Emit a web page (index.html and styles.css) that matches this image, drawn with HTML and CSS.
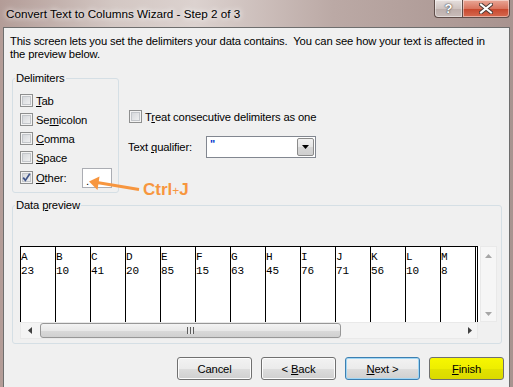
FILE: index.html
```html
<!DOCTYPE html>
<html lang="en">

<head>
    <meta charset="UTF-8">
    <link rel="stylesheet" href="styles.css">
</head>

<body>
    <div class="window">
        <div class="title-bar">
            <span class="title">Convert Text to Columns Wizard - Step 2 of 3</span>
            <div class="caption-buttons">
                <div class="cap-btn help">?</div>
                <div class="cap-btn close">
                    <svg width="14" height="11" viewBox="0 0 14 11">
                        <path d="M2 1.5 L12 9.5 M12 1.5 L2 9.5" stroke="#4a3a36" stroke-width="4" stroke-linecap="square" />
                        <path d="M2 1.5 L12 9.5 M12 1.5 L2 9.5" stroke="#fff" stroke-width="2" stroke-linecap="square" />
                    </svg>
                </div>
            </div>
        </div>

        <div class="client">
            <p class="intro">This screen lets you set the delimiters your data contains.&nbsp; You can see how your text is affected in<br>the preview below.</p>

            <div class="options">
                <fieldset class="group delimiters">
                    <legend>Delimiters</legend>
                    <label class="check-row"><span class="box"></span><span><u>T</u>ab</span></label>
                    <label class="check-row"><span class="box"></span><span>Se<u>m</u>icolon</span></label>
                    <label class="check-row"><span class="box"></span><span><u>C</u>omma</span></label>
                    <label class="check-row"><span class="box"></span><span><u>S</u>pace</span></label>
                    <label class="check-row other-row">
                        <span class="box checked">
                            <svg width="11" height="11" viewBox="0 0 11 11">
                                <path d="M2.2 5.6 L4.4 8.4 L8.8 1.8" fill="none" stroke="#3f5489" stroke-width="1.7" />
                            </svg>
                        </span>
                        <span><u>O</u>ther:</span>
                        <span class="other-input">.</span>
                    </label>
                </fieldset>

                <div class="side-options">
                    <label class="check-row"><span class="box"></span><span>T<u>r</u>eat consecutive delimiters as one</span></label>
                    <div class="qualifier-row">
                        <span class="qualifier-label">Text <u>q</u>ualifier:</span>
                        <div class="combo">
                            <span class="combo-value">"</span>
                            <span class="combo-btn">
                                <svg width="7" height="4" viewBox="0 0 7 4"><path d="M0 0 H7 L3.5 4 Z" fill="#000" /></svg>
                            </span>
                        </div>
                    </div>
                </div>
            </div>

            <fieldset class="group preview">
                <legend>Data <u>p</u>review</legend>
                <div class="preview-box">
                    <div class="grid-row">
                        <div class="grid" id="grid"></div>
                        <div class="grid-fill"></div>
                        <div class="vscroll">
                            <svg width="7" height="4" viewBox="0 0 7 4"><path d="M0 4 H7 L3.5 0 Z" fill="#a6a6a6" /></svg>
                            <svg width="7" height="4" viewBox="0 0 7 4"><path d="M0 0 H7 L3.5 4 Z" fill="#a6a6a6" /></svg>
                        </div>
                    </div>
                    <div class="hscroll-row">
                        <div class="hscroll">
                            <svg class="arrow" width="4" height="7" viewBox="0 0 4 7"><path d="M4 0 V7 L0 3.5 Z" fill="#404040" /></svg>
                            <div class="thumb"><span class="grip"></span></div>
                            <svg class="arrow right" width="4" height="7" viewBox="0 0 4 7"><path d="M0 0 V7 L4 3.5 Z" fill="#404040" /></svg>
                        </div>
                        <div class="corner"></div>
                    </div>
                </div>
            </fieldset>

            <div class="buttons">
                <button class="btn">Cancel</button>
                <button class="btn">&lt; <u>B</u>ack</button>
                <button class="btn default"><u>N</u>ext &gt;</button>
                <button class="btn finish"><u>F</u>inish</button>
            </div>
        </div>

        <!-- hint drawn over the dialog -->
        <svg class="hint-arrow" width="513" height="387" viewBox="0 0 513 387">
            <path d="M139 189.5 L94 182" stroke="#f7963f" stroke-width="3" fill="none" />
            <path d="M89 181.5 L99.5 176.5 L97.5 190 Z" fill="#f7963f" />
        </svg>
        <span class="hint-text">Ctrl<span class="plus">+</span>J</span>
    </div>

    <script>
        const columns = [
            ['A', '23'], ['B', '10'], ['C', '41'], ['D', '20'], ['E', '85'],
            ['F', '15'], ['G', '63'], ['H', '45'], ['I', '76'], ['J', '71'],
            ['K', '56'], ['L', '10'], ['M', '8']
        ];
        const grid = document.getElementById('grid');
        columns.forEach(col => {
            const div = document.createElement('div');
            div.className = 'col';
            div.innerHTML = '<span>' + col[0] + '</span><span>' + col[1] + '</span>';
            grid.appendChild(div);
        });
        const end = document.createElement('div');
        end.className = 'col-end';
        grid.appendChild(end);
    </script>
</body>

</html>
```

FILE: styles.css
```css
body {
    margin: 0;
    font-family: "Liberation Sans", Arial, sans-serif;
    font-size: 11.25px;
    letter-spacing: -0.15px;
    color: #000;
}

.window {
    position: relative;
    width: 513px;
    height: 387px;
    overflow: hidden;
    background: linear-gradient(to right, #b39c97 0%, #d3c7c3 22%, #dcd2cf 38%, #bba9a5 65%, #a8938f 100%);
}

/* title bar */
.title-bar {
    height: 27px;
    display: flex;
    align-items: flex-start;
}

.title {
    margin: 6px 0 0 6px;
    line-height: 15px;
    font-size: 11.7px;
    letter-spacing: 0;
    text-shadow: 0 0 5px #fff, 0 0 9px rgba(255, 255, 255, 0.8);
}

.caption-buttons {
    margin-left: auto;
    margin-right: 3px;
    display: flex;
}

.cap-btn {
    height: 17px;
    border: 1px solid #5f4d49;
    border-top: none;
    display: flex;
    align-items: center;
    justify-content: center;
    box-shadow: inset 0 0 0 1px rgba(255, 255, 255, 0.45);
}

.help {
    width: 27px;
    border-radius: 0 0 0 4px;
    border-right: none;
    background: linear-gradient(#e6dfdd, #cfc4c1 50%, #bcaeab 51%, #c9bdba);
    color: #fff;
    font-weight: bold;
    font-size: 13px;
    text-shadow: 0 0 1px #444, 0 0 2px #444;
}

.close {
    width: 46px;
    border-radius: 0 0 4px 0;
    background: linear-gradient(#e9a797, #d9755f 50%, #c7462c 51%, #d6694f);
}

/* client area */
.client {
    margin: 0 3px;
    height: 360px;
    border: 1px solid #6e6e6e;
    border-bottom: none;
    background-color: #f0f0f0;
}

.intro {
    margin: 7px 0 0 6px;
    line-height: 13px;
    white-space: nowrap;
}

.options {
    display: flex;
    margin: 11px 0 0 8px;
}

.group {
    margin: 0;
    border: 1px solid #d5dfe5;
    border-radius: 3px;
    min-width: 0;
    box-sizing: border-box;
}

.group legend {
    padding: 0 1px;
    margin-left: -5px;
    line-height: 13px;
}

.delimiters {
    width: 107px;
    padding: 6px 6px 4px 7px;
}

.check-row {
    display: flex;
    align-items: center;
    gap: 3px;
    height: 19px;
}

.other-row {
    height: 21px;
}

.box {
    width: 13px;
    height: 13px;
    box-sizing: border-box;
    border: 1px solid #8e8f8f;
    background: linear-gradient(135deg, #cfd2d6, #f6f6f6);
    box-shadow: inset 0 0 0 1px #f3f3f3, inset 0 0 0 2px #c3c6ca;
    display: flex;
    align-items: center;
    justify-content: center;
    flex-shrink: 0;
}

.other-input {
    margin-left: auto;
    width: 30px;
    height: 20px;
    box-sizing: border-box;
    border: 1px solid #abadb3;
    background-color: #fff;
    padding: 6px 0 0 3px;
    line-height: 12px;
}

.side-options {
    margin-left: 9px;
    padding-top: 35px;
}

.side-options .check-row {
    padding-left: 1px;
}

.qualifier-row {
    display: flex;
    align-items: center;
    margin-top: 10px;
}

.qualifier-label {
    width: 78px;
}

.combo {
    width: 110px;
    height: 22px;
    box-sizing: border-box;
    border: 1px solid #828790;
    background-color: #fff;
    display: flex;
    justify-content: space-between;
}

.combo-value {
    color: #0033cc;
    padding: 1px 0 0 3px;
    line-height: 12px;
    font-size: 11px;
    font-weight: bold;
}

.combo-btn {
    width: 15px;
    margin: 1px;
    border: 1px solid #8b8b8b;
    border-radius: 2px;
    background: linear-gradient(#f2f2f2, #e6e6e6 50%, #d6d6d6 51%, #cfcfcf);
    display: flex;
    align-items: center;
    justify-content: center;
}

/* data preview */
.preview {
    width: 490px;
    margin: 6px 0 0 8px;
    padding: 34px 4px 4px 7px;
}

.preview-box {
    width: 477px;
}

.grid-row {
    display: flex;
    height: 76px;
}

.grid {
    display: flex;
    border-top: 1px solid #000;
    background-color: #fff;
    font-family: "Liberation Mono", "Courier New", monospace;
    font-size: 11px;
    letter-spacing: 0;
    line-height: 14px;
}

.col {
    width: 35px;
    box-sizing: border-box;
    border-left: 1px solid #000;
    padding-top: 3px;
    display: flex;
    flex-direction: column;
}

.col-end {
    width: 3px;
    box-sizing: border-box;
    border-left: 1px solid #000;
    border-right: 1px solid #000;
}

.grid-fill {
    width: 2px;
    background-color: #fff;
}

.vscroll {
    width: 17px;
    box-sizing: border-box;
    border: 1px solid #e9e9e9;
    background-color: #f6f6f6;
    display: flex;
    flex-direction: column;
    justify-content: space-between;
    align-items: center;
    padding: 7px 0 5px;
}

.hscroll-row {
    display: flex;
    height: 17px;
}

.hscroll {
    width: 458px;
    box-sizing: border-box;
    border: 1px solid #e9e9e9;
    background-color: #f4f4f4;
    display: flex;
    align-items: center;
}

.hscroll .arrow {
    margin: 0 8px 0 7px;
}

.hscroll .right {
    margin: 0 5px 0 auto;
}

.thumb {
    width: 301px;
    height: 15px;
    box-sizing: border-box;
    border: 1px solid #979797;
    border-radius: 3px;
    background: linear-gradient(#f3f3f3, #e8e8e8 50%, #d9d9d9 51%, #d0d0d0);
    display: flex;
    align-items: center;
    justify-content: center;
}

.grip {
    width: 7px;
    height: 7px;
    background: repeating-linear-gradient(to right, #5e5e5e 0 1px, #e8e8e8 1px 3px);
}

.corner {
    width: 19px;
    background-color: #f0f0f0;
}

/* buttons */
.buttons {
    display: flex;
    justify-content: flex-end;
    gap: 9px;
    margin: 13px 5px 0 0;
}

.btn {
    width: 75px;
    height: 23px;
    border: 1px solid #707070;
    border-radius: 3px;
    background: linear-gradient(#f2f2f2, #ebebeb 50%, #dddddd 51%, #cfcfcf);
    box-shadow: inset 0 0 0 1px #fcfcfc;
    font-family: inherit;
    font-size: 11.25px;
    letter-spacing: inherit;
    color: #000;
    padding: 0;
}

.btn.default {
    border-color: #3c7fb1;
    box-shadow: inset 0 0 0 1px #9fd6f5;
}

.btn.finish {
    background: linear-gradient(#f7f700, #eeee00 50%, #e2e200 51%, #dada00);
    box-shadow: none;
}

/* hint overlay */
.hint-arrow {
    position: absolute;
    left: 0;
    top: 0;
    pointer-events: none;
}

.hint-text {
    position: absolute;
    left: 143px;
    top: 180px;
    color: #f7963f;
    font-weight: bold;
    font-size: 17px;
    letter-spacing: 0;
    line-height: 20px;
}

.hint-text .plus {
    font-size: 12px;
    font-weight: normal;
}
```
